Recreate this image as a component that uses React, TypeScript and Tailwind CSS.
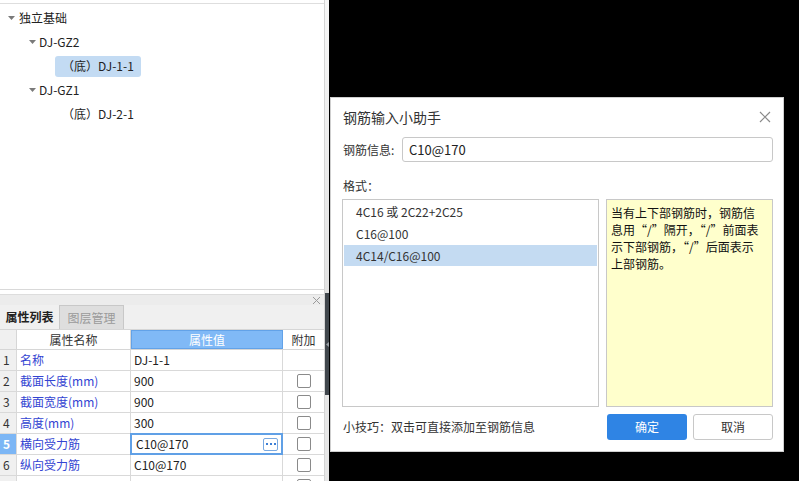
import React from "react";

const font = { fontFamily: '"Noto Sans CJK SC", "Noto Sans", sans-serif' };

function Caret() {
  return (
    <svg width="7" height="4" viewBox="0 0 7 4" className="shrink-0">
      <path d="M0 0h7L3.5 4z" fill="#7a7a7a" />
    </svg>
  );
}

type Row = { no: string; name: string; value: string; check: boolean; active?: boolean };

const rows: Row[] = [
  { no: "1", name: "名称", value: "DJ-1-1", check: false },
  { no: "2", name: "截面长度(mm)", value: "900", check: true },
  { no: "3", name: "截面宽度(mm)", value: "900", check: true },
  { no: "4", name: "高度(mm)", value: "300", check: true },
  { no: "5", name: "横向受力筋", value: "C10@170", check: true, active: true },
  { no: "6", name: "纵向受力筋", value: "C10@170", check: true },
  { no: "", name: "", value: "", check: true },
];

function Checkbox() {
  return <div className="h-[14px] w-[14px] shrink-0 rounded-[2px] border border-[#8a8a8a] bg-white" />;
}

function PropertyTable() {
  return (
    <div className="flex shrink-0 flex-col text-[12px]">
      <div className="flex h-[21px] shrink-0 border-y border-[#d6d6d6] bg-white text-[#333]">
        <div className="w-[17px] border-r border-[#d6d6d6] bg-[#f0f0f0]" />
        <div className="flex w-[114px] items-center justify-center border-r border-[#d6d6d6]">属性名称</div>
        <div className="flex w-[152px] items-center justify-center border border-[#62a2e8] bg-[#80b9f6] text-white">
          属性值
        </div>
        <div className="flex w-[41px] items-center justify-center">附加</div>
      </div>
      {rows.map((r, i) => (
        <div key={i} className="flex h-[21px] shrink-0 border-b border-[#d9d9d9]">
          <div
            className={
              r.active
                ? "flex w-[17px] items-center border-r border-[#d9d9d9] bg-[#7cb6f5] pl-[3px] font-bold text-white"
                : "flex w-[17px] items-center border-r border-[#d9d9d9] bg-[#f0f0f0] pl-[3px] text-[#333]"
            }
          >
            {r.no}
          </div>
          <div className="flex w-[114px] items-center border-r border-[#d9d9d9] pl-[3px] text-[#3344d2]">
            {r.name}
          </div>
          {r.active ? (
            <div className="-my-px -ml-px flex h-[22px] w-[153px] items-center justify-between border-2 border-[#60a0e6] pl-[4px] pr-[3px] text-[#222]">
              <span>{r.value}</span>
              <span className="flex h-[13px] w-[15px] items-center justify-center gap-[2px] rounded-[2px] border border-[#7aa9e0] bg-white">
                <span className="h-[2px] w-[2px] bg-[#3d7fd6]" />
                <span className="h-[2px] w-[2px] bg-[#3d7fd6]" />
                <span className="h-[2px] w-[2px] bg-[#3d7fd6]" />
              </span>
            </div>
          ) : (
            <div className="flex w-[152px] items-center border-r border-[#d9d9d9] pl-[3px] text-[#222]">
              {r.value}
            </div>
          )}
          <div className="flex w-[41px] items-center justify-center">{r.check && <Checkbox />}</div>
        </div>
      ))}
    </div>
  );
}

function LeftPanel() {
  return (
    <div className="flex h-[481px] w-[325px] shrink-0 flex-col border-r border-[#d4d4d4] bg-white">
      <div className="h-[3px] shrink-0" />
      <div className="flex flex-1 flex-col border-t border-[#dedede] pt-[2px] text-[12px] text-[#222]">
        <div className="flex h-[24px] items-center gap-[4px] pl-[8px]">
          <Caret />
          <span>独立基础</span>
        </div>
        <div className="flex h-[24px] items-center gap-[3px] pl-[29px]">
          <Caret />
          <span>DJ-GZ2</span>
        </div>
        <div className="flex h-[24px] items-center pl-[55px]">
          <span className="flex h-[21px] items-center rounded-[3px] bg-[#c3dbf3] px-[7px]">（底）DJ-1-1</span>
        </div>
        <div className="flex h-[24px] items-center gap-[3px] pl-[29px]">
          <Caret />
          <span>DJ-GZ1</span>
        </div>
        <div className="flex h-[24px] items-center pl-[62px]">
          <span>（底）DJ-2-1</span>
        </div>
      </div>
      <div className="flex h-[192px] shrink-0 flex-col overflow-hidden border-t border-[#d9d9d9]">
        <div className="h-[4px] shrink-0 bg-white" />
        <div className="flex h-[11px] shrink-0 items-center justify-end border-t border-[#dddddd] bg-[#ececec] pr-[3px]">
          <svg width="9" height="9" viewBox="0 0 9 9">
            <path d="M1 1l7 7M8 1l-7 7" stroke="#9a9a9a" strokeWidth="1" />
          </svg>
        </div>
        <div className="flex h-[24px] shrink-0 bg-[#f0f0f0] text-[12px]">
          <div className="flex w-[59px] items-center justify-center font-semibold text-[#222]">属性列表</div>
          <div className="flex w-[65px] items-center justify-center border-x border-t border-[#c8c8c8] bg-[#dedede] text-[#9a9a9a]">
            图层管理
          </div>
        </div>
        <PropertyTable />
      </div>
    </div>
  );
}

function Dialog() {
  return (
    <div className="flex h-[355px] w-[454px] flex-col border border-[#cfcfcf] bg-white pl-[11px] pr-[10px] text-[12px] text-[#333]">
      <div className="mt-[9px] flex h-[20px] items-center justify-between">
        <span className="ml-px text-[14px]">钢筋输入小助手</span>
        <svg width="12" height="12" viewBox="0 0 12 12" className="mr-[2px]">
          <path d="M1 1l10 10M11 1L1 11" stroke="#8a8a8a" strokeWidth="1.2" />
        </svg>
      </div>
      <div className="mt-[10px] flex h-[25px] items-center">
        <span className="ml-px w-[59px]">钢筋信息:</span>
        <div className="flex h-[25px] flex-1 items-center rounded-[3px] border border-[#c8c8c8] pl-[6px] text-[13px] text-[#222]">
          C10@170
        </div>
      </div>
      <div className="mt-[15px] ml-px flex h-[18px] items-center">格式：</div>
      <div className="mt-[4px] flex h-[208px]">
        <div className="flex w-[257px] flex-col border border-[#c8c8c8] p-px text-[#333]">
          <div className="flex h-[22px] items-center pl-[12px]">4C16 或 2C22+2C25</div>
          <div className="flex h-[22px] items-center pl-[12px]">C16@100</div>
          <div className="flex h-[21px] items-center bg-[#c4dbf2] pl-[12px]">4C14/C16@100</div>
        </div>
        <div className="ml-[7px] flex-1 overflow-hidden whitespace-nowrap border border-[#c8c8c8] bg-[#ffffcc] pl-[4px] pt-[4px] leading-[17px] text-[#111]">
          当有上下部钢筋时，钢筋信
          <br />
          息用“/”隔开，“/”前面表
          <br />
          示下部钢筋，“/”后面表示
          <br />
          上部钢筋。
        </div>
      </div>
      <div className="mt-[7px] flex h-[26px] items-center">
        <span className="ml-px flex-1">小技巧：双击可直接添加至钢筋信息</span>
        <button className="flex h-[26px] w-[80px] items-center justify-center rounded-[3px] bg-[#2f84e4] text-[12px] text-white">
          确定
        </button>
        <button className="ml-[6px] flex h-[26px] w-[80px] items-center justify-center rounded-[3px] border border-[#c8c8c8] bg-white text-[12px] text-[#333]">
          取消
        </button>
      </div>
    </div>
  );
}

export default function App() {
  return (
    <div className="flex h-[481px] w-[799px] overflow-hidden bg-black" style={font}>
      <LeftPanel />
      <div className="flex h-[481px] w-[4px] shrink-0 flex-col">
        <div className="h-[293px] bg-gradient-to-b from-[#f7f7f7] to-[#e2e2e2]" />
        <div className="relative h-[102px] bg-[#41474d]">
          <svg width="3" height="5" viewBox="0 0 3 5" className="absolute left-px top-[49px]">
            <path d="M3 0v5L0 2.5z" fill="#9aa0a6" />
          </svg>
        </div>
        <div className="flex-1 bg-[#e6e6e6]" />
      </div>
      <div className="flex-1 pl-px pt-[97px]">
        <Dialog />
      </div>
    </div>
  );
}
